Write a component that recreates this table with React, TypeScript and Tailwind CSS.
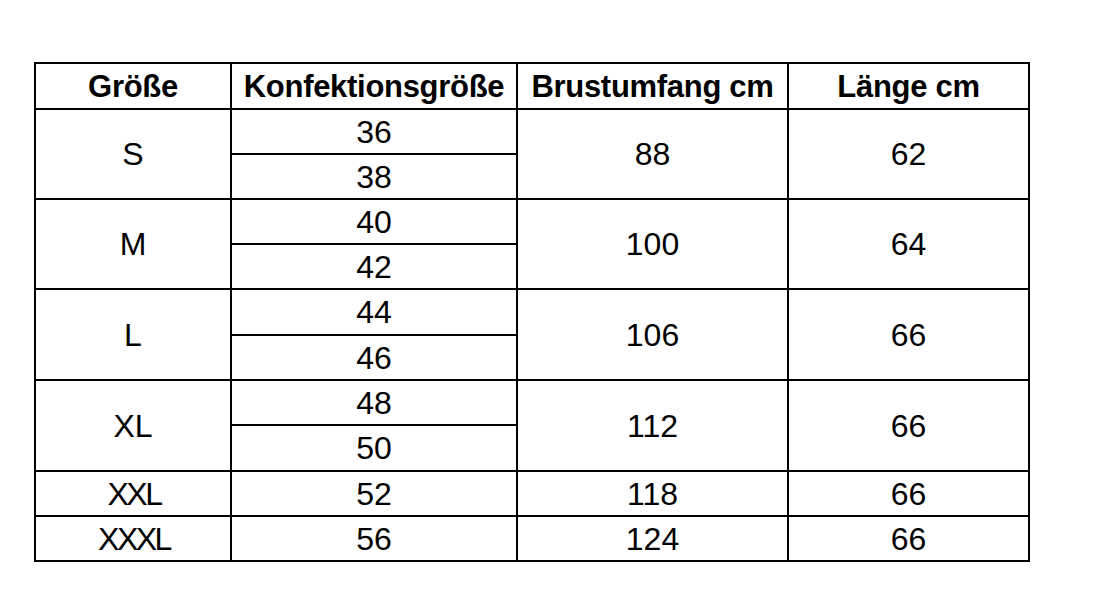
import React from "react";

type Cell = { text: string; col: string; row: string; bold?: boolean; tight?: boolean };

const cells: Cell[] = [
  { text: "Größe", col: "col-start-1", row: "row-start-1", bold: true },
  { text: "Konfektionsgröße", col: "col-start-2", row: "row-start-1", bold: true },
  { text: "Brustumfang cm", col: "col-start-3", row: "row-start-1", bold: true },
  { text: "Länge cm", col: "col-start-4", row: "row-start-1", bold: true },

  { text: "S", col: "col-start-1", row: "row-start-2 row-span-2" },
  { text: "36", col: "col-start-2", row: "row-start-2" },
  { text: "38", col: "col-start-2", row: "row-start-3" },
  { text: "88", col: "col-start-3", row: "row-start-2 row-span-2" },
  { text: "62", col: "col-start-4", row: "row-start-2 row-span-2" },

  { text: "M", col: "col-start-1", row: "row-start-4 row-span-2" },
  { text: "40", col: "col-start-2", row: "row-start-4" },
  { text: "42", col: "col-start-2", row: "row-start-5" },
  { text: "100", col: "col-start-3", row: "row-start-4 row-span-2" },
  { text: "64", col: "col-start-4", row: "row-start-4 row-span-2" },

  { text: "L", col: "col-start-1", row: "row-start-6 row-span-2" },
  { text: "44", col: "col-start-2", row: "row-start-6" },
  { text: "46", col: "col-start-2", row: "row-start-7" },
  { text: "106", col: "col-start-3", row: "row-start-6 row-span-2" },
  { text: "66", col: "col-start-4", row: "row-start-6 row-span-2" },

  { text: "XL", col: "col-start-1", row: "row-start-8 row-span-2" },
  { text: "48", col: "col-start-2", row: "row-start-8" },
  { text: "50", col: "col-start-2", row: "row-start-9" },
  { text: "112", col: "col-start-3", row: "row-start-8 row-span-2" },
  { text: "66", col: "col-start-4", row: "row-start-8 row-span-2" },

  { text: "XXL", col: "col-start-1", row: "row-start-10", tight: true },
  { text: "52", col: "col-start-2", row: "row-start-10" },
  { text: "118", col: "col-start-3", row: "row-start-10" },
  { text: "66", col: "col-start-4", row: "row-start-10" },

  { text: "XXXL", col: "col-start-1", row: "row-start-11", tight: true },
  { text: "56", col: "col-start-2", row: "row-start-11" },
  { text: "124", col: "col-start-3", row: "row-start-11" },
  { text: "66", col: "col-start-4", row: "row-start-11" },
];

export default function App() {
  return (
    <div
      className="w-[1098px] h-[602px] bg-white pt-[62px] pl-[34px]"
      style={{ fontFamily: '"Liberation Sans", Arial, sans-serif' }}
    >
      <div className="inline-grid grid-cols-[194px_284px_269px_239px] grid-rows-[44px_43px_43px_43px_43px_44px_43px_43px_44px_43px_43px] gap-[2px] p-[2px] bg-black">
        {cells.map((c, i) => (
          <div
            key={i}
            className={`${c.col} ${c.row} bg-white flex items-center justify-center text-black leading-none ${
              c.bold ? "font-bold text-[31px] tracking-[-0.3px]" : "text-[32px]"
            } ${c.tight ? "tracking-[-2.5px] pl-[2px]" : ""}`}
          >
            {c.text}
          </div>
        ))}
      </div>
    </div>
  );
}
